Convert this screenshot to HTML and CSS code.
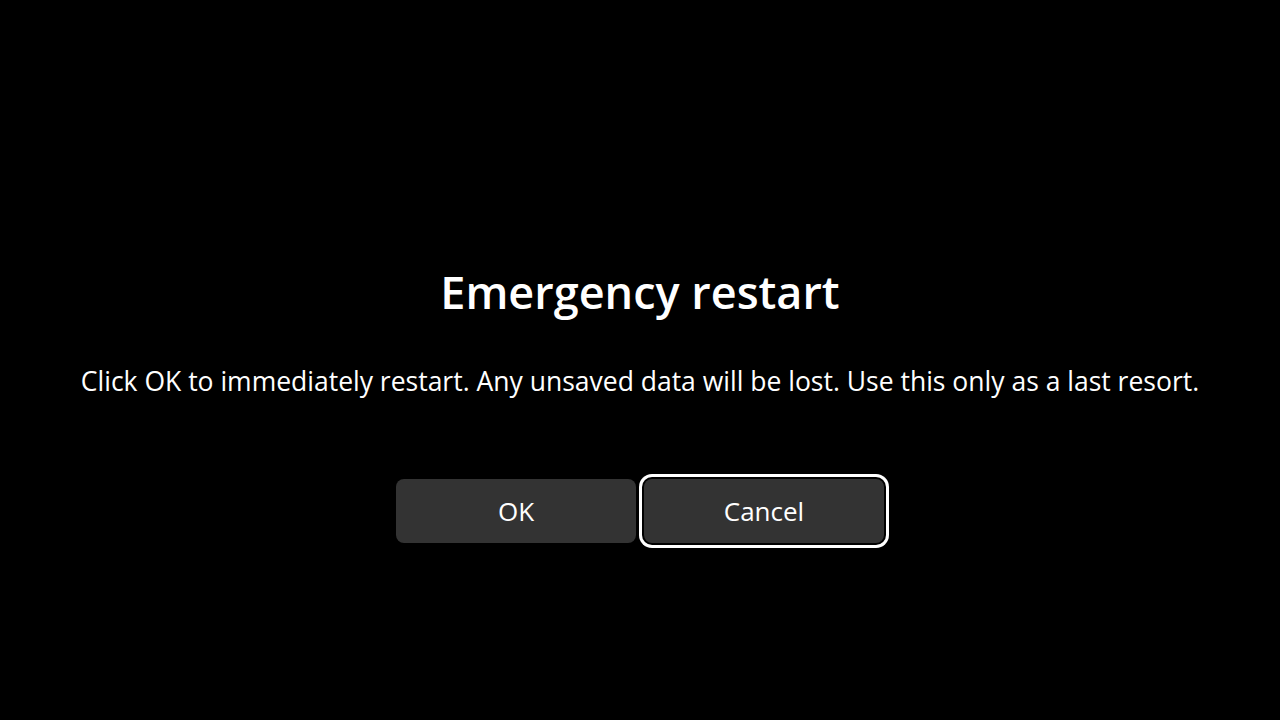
FILE: index.html
```html
<!DOCTYPE html>
<html lang="en">
<head>
    <meta charset="UTF-8">
    <meta name="viewport" content="width=device-width, initial-scale=1.0">
    <title>Emergency restart</title>
    <link rel="stylesheet" href="styles.css">
</head>
<body>

    <div class="dialog">
        <h1 class="title">Emergency restart</h1>
        <p class="message">Click OK to immediately restart. Any unsaved data will be lost. Use this only as a last resort.</p>
        <div class="actions">
            <button class="btn">OK</button>
            <button class="btn focused">Cancel</button>
        </div>
    </div>

</body>
</html>
```

FILE: styles.css
```css
html, body {
    margin: 0;
    padding: 0;
    height: 100%;
    background-color: #000;
}

body {
    font-family: "Open Sans", "Noto Sans", sans-serif;
    color: #fff;
}

.dialog {
    display: flex;
    flex-direction: column;
    align-items: center;
    padding-top: 262px;
}

.title {
    margin: 0;
    font-size: 45px;
    font-weight: 600;
    line-height: 60px;
}

.message {
    margin: 42px 0 0;
    font-size: 26.5px;
    line-height: 34px;
}

.actions {
    display: flex;
    gap: 8px;
    margin-top: 81px;
}

.btn {
    width: 240px;
    height: 64px;
    border: none;
    border-radius: 8px;
    background-color: #333;
    color: #fff;
    font-family: inherit;
    font-size: 26px;
    padding: 0;
}

/* keyboard focus ring around the default button */
.btn.focused {
    box-shadow: 0 0 0 2px #000, 0 0 0 5px #fff;
}
```
